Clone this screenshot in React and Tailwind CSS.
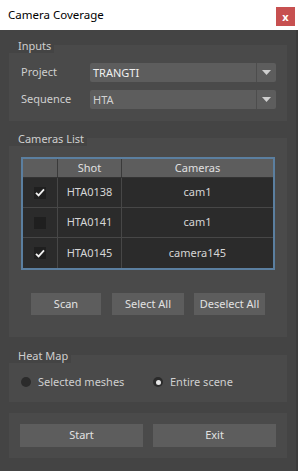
import React, { useState } from 'react';

const font = { fontFamily: '"Noto Sans", "Open Sans", sans-serif' };

const GroupLabel = ({ children }) => (
  <div className="relative z-10 self-start -mb-[8px] h-[14px] pl-[9px] pr-[3px] bg-[#444444] text-[11px] leading-[14px] text-[#cfcfcf]">
    {children}
  </div>
);

const Combo = ({ value, bright }) => (
  <div className="flex h-[19px] flex-1 rounded-[2px] bg-[#5d5d5d]">
    <div className={`flex-1 pl-[3px] text-[11px] leading-[19px] ${bright ? 'text-[#f0f0f0]' : 'text-[#d2d2d2]'}`}>{value}</div>
    <div className="flex w-[20px] items-center justify-center border-l border-[#4d4d4d]">
      <svg width="9" height="5" viewBox="0 0 9 5"><path d="M0 0h9L4.5 5z" fill="#cfcfcf" /></svg>
    </div>
  </div>
);

const Check = ({ on }) => (
  <div className="flex h-[12px] w-[12px] items-center justify-center bg-[#1f1f1f]">
    {on && (
      <svg width="10" height="9" viewBox="0 0 10 9">
        <path d="M1 4.8l2.6 2.6L9 1.3" fill="none" stroke="#f2f2f2" strokeWidth="1.8" />
      </svg>
    )}
  </div>
);

const Btn = ({ children, className }) => (
  <button className={`bg-[#5d5d5d] text-[11px] text-[#e2e2e2] ${className}`}>{children}</button>
);

const rows = [
  { shot: 'HTA0138', cam: 'cam1', on: true },
  { shot: 'HTA0141', cam: 'cam1', on: false },
  { shot: 'HTA0145', cam: 'camera145', on: true },
];

export default function App() {
  const [items, setItems] = useState(rows);
  const [mode, setMode] = useState('scene');

  const toggle = (i) => setItems(items.map((r, j) => (j === i ? { ...r, on: !r.on } : r)));

  return (
    <div className="flex h-[471px] w-[298px] flex-col bg-[#444444]" style={font}>
      <div className="flex h-[30px] bg-white">
        <div className="pl-[8px] pt-[6px] text-[11.5px] leading-[18px] text-black">Camera Coverage</div>
        <div className="ml-auto mr-[3px] mt-[7px] flex h-[19px] w-[19px] items-center justify-center bg-[#c75050] text-[11px] font-bold leading-none text-white">
          x
        </div>
      </div>

      <div className="flex flex-1">
        <div className="flex w-[296px] flex-col px-[9px] pt-[9px]">
          {/* Inputs */}
          <GroupLabel>Inputs</GroupLabel>
          <div className="flex flex-col gap-[8px] bg-[#4a4a4a] pb-[12px] pl-[12px] pr-[11px] pt-[18px]">
            <div className="flex items-center">
              <div className="w-[69px] text-[11px] text-[#cfcfcf]">Project</div>
              <Combo value="TRANGTI" bright />
            </div>
            <div className="flex items-center">
              <div className="w-[69px] text-[11px] text-[#cfcfcf]">Sequence</div>
              <Combo value="HTA" />
            </div>
          </div>

          {/* Cameras list */}
          <div className="mt-[11px] flex flex-col">
            <GroupLabel>Cameras List</GroupLabel>
            <div className="flex flex-col bg-[#4a4a4a] px-[12px] pb-[22px] pt-[19px]">
              <div className="border-2 border-[#5b7fa0] bg-[#2b2b2b] text-[11px]">
                <div className="flex h-[19px] border-b border-[#333333] bg-[#5d5d5d] leading-[18px] text-[#e0e0e0]">
                  <div className="w-[35px] border-r border-[#3a3a3a]" />
                  <div className="w-[64px] border-r border-[#3a3a3a] text-center">Shot</div>
                  <div className="flex-1 text-center">Cameras</div>
                </div>
                {items.map((r, i) => (
                  <div
                    key={r.shot}
                    className={`flex h-[30px] items-center text-[#d6d6d6] ${i < items.length - 1 ? 'border-b border-[#474747]' : ''}`}
                  >
                    <div className="flex h-full w-[35px] items-center justify-center border-r border-[#474747]" onClick={() => toggle(i)}>
                      <Check on={r.on} />
                    </div>
                    <div className="flex h-full w-[64px] items-center justify-center border-r border-[#474747]">{r.shot}</div>
                    <div className="flex-1 text-center">{r.cam}</div>
                  </div>
                ))}
              </div>
              <div className="mt-[23px] flex justify-between px-[10px]">
                <Btn className="h-[22px] w-[70px]">Scan</Btn>
                <Btn className="ml-[11px] h-[22px] w-[72px]">Select All</Btn>
                <Btn className="ml-[10px] h-[22px] w-[71px]">Deselect All</Btn>
              </div>
            </div>
          </div>

          {/* Heat map */}
          <div className="mt-[12px] flex flex-col">
            <GroupLabel>Heat Map</GroupLabel>
            <div className="flex h-[47px] items-end bg-[#4a4a4a] pb-[14px] pl-[12px]">
              <div className="flex h-[12px] items-center text-[11px] text-[#cfcfcf]">
                <div className="flex w-[132px] items-center" onClick={() => setMode('sel')}>
                  <div className="flex h-[10px] w-[10px] items-center justify-center rounded-full bg-[#2b2b2b]">
                    {mode === 'sel' && <div className="h-[4px] w-[4px] rounded-full bg-[#e6e6e6]" />}
                  </div>
                  <span className="ml-[7px]">Selected meshes</span>
                </div>
                <div className="flex items-center" onClick={() => setMode('scene')}>
                  <div className="flex h-[10px] w-[10px] items-center justify-center rounded-full bg-[#2b2b2b]">
                    {mode === 'scene' && <div className="h-[5px] w-[5px] rounded-full bg-[#e6e6e6]" />}
                  </div>
                  <span className="ml-[7px]">Entire scene</span>
                </div>
              </div>
            </div>
          </div>

          {/* Actions */}
          <div className="mt-[11px] flex gap-[10px] bg-[#4a4a4a] px-[11px] py-[11px]">
            <Btn className="h-[23px] flex-1">Start</Btn>
            <Btn className="h-[23px] flex-1">Exit</Btn>
          </div>
        </div>
        <div className="w-[2px] bg-[#3c3c3c]" />
      </div>
    </div>
  );
}
